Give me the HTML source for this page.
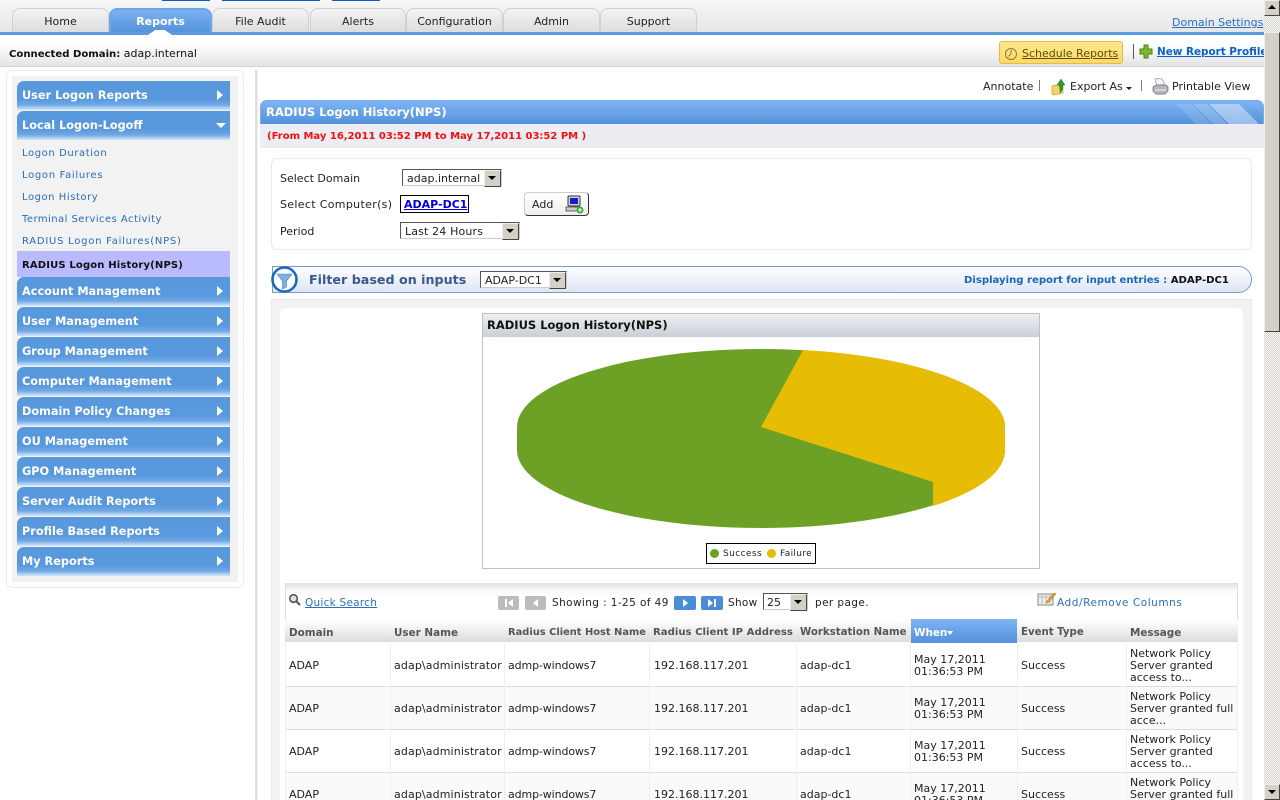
<!DOCTYPE html>
<html><head><meta charset="utf-8"><title>RADIUS Logon History(NPS)</title>
<style>
html,body{margin:0;padding:0;width:1280px;height:800px;overflow:hidden;background:#fff}
body{position:relative;font:11px "DejaVu Sans","Liberation Sans",sans-serif;color:#222}
div,span,a,svg{position:absolute;box-sizing:border-box}
.t{white-space:nowrap;line-height:14px;height:14px}
.b{font-weight:bold}
a{color:#0a5cc4;text-decoration:underline}
.tab{top:8px;height:25px;border:1px solid #d0d0d0;border-bottom:0;border-radius:8px 8px 0 0;background:linear-gradient(#f4f4f4,#dcdcdc);text-align:center;line-height:25px;color:#222}
.nav{left:17px;width:213px;height:29px;border-radius:7px 0 0 0;background:linear-gradient(#5898dc 0,#5898dc 62%,#6ea8e6 82%,#d6e6f8 100%);color:#fff;font-weight:bold;font-size:11.3px;line-height:30px;padding-left:5px;white-space:nowrap}
.nav:after{content:"";position:absolute;right:7px;top:9px;border-left:6px solid #fff;border-top:5px solid transparent;border-bottom:5px solid transparent}
.nav.o:after{right:4px;top:12px;border-top:5px solid #fff;border-left:5px solid transparent;border-right:5px solid transparent;border-bottom:0}
.sub{left:22px;color:#2a6cb8;font-size:10px;line-height:14px;height:14px;white-space:nowrap}
.sel{height:17px;background:#fff;border:1px solid #555;border-right-color:#ccc;border-bottom-color:#ccc;line-height:17px;padding-left:4px;white-space:nowrap}
.sel i{position:absolute;right:0;top:0;width:15px;height:15px;background:#d4d0c8;border:1px solid;border-color:#eee #444 #444 #eee}
.sel i:after{content:"";position:absolute;left:3px;top:5px;border-top:4px solid #000;border-left:4px solid transparent;border-right:4px solid transparent}
.th{top:626px;height:14px;line-height:14px;font-weight:bold;font-size:10.4px;color:#555;white-space:nowrap}
.c{white-space:nowrap;line-height:12px;font-size:11px;color:#222;margin-top:1px}
.u{letter-spacing:.12px}
.h{letter-spacing:-.12px}
.v{top:643px;width:1px;height:172px;background:#eee}
.pg{top:596px;width:21px;height:14px;border-radius:2px}
</style></head><body>

<!-- top bar -->
<div style="left:0;top:0;width:1264px;height:33px;background:linear-gradient(#f6f6f6,#e6e6e6)"></div>
<div style="left:162px;top:0;width:48px;height:1px;background:#0a5cc0"></div>
<div style="left:222px;top:0;width:98px;height:1px;background:#0a5cc0"></div>
<div style="left:332px;top:0;width:48px;height:1px;background:#0a5cc0"></div>
<div class="tab" style="left:12px;width:97px">Home</div>
<div class="tab b" style="left:109px;width:103px;border:2px solid #6ea6ea;border-bottom:0;background:linear-gradient(#7cb2f2,#5291d8);color:#fff;line-height:23px">Reports</div>
<div class="tab" style="left:212px;width:97px">File Audit</div>
<div class="tab" style="left:310px;width:96px">Alerts</div>
<div class="tab" style="left:406px;width:97px">Configuration</div>
<div class="tab" style="left:503px;width:97px">Admin</div>
<div class="tab" style="left:600px;width:97px">Support</div>
<a class="t" style="left:1172px;top:16px;font-size:11px;color:#2a70c0">Domain Settings</a>
<div style="left:0;top:32px;width:1264px;height:3px;background:#5a9ae0"></div>
<div style="left:148px;top:30px;width:24px;height:5px;background:#fff;clip-path:polygon(0 100%,30% 0,70% 0,100% 100%)"></div>

<!-- connected domain bar -->
<div style="left:0;top:35px;width:1264px;height:32px;background:linear-gradient(#fff 30%,#e4e4e4);border-bottom:1px solid #d4d4d4"></div>
<div class="t" style="left:9px;top:47px;color:#111;font-size:11px"><b style="font-size:10.1px">Connected Domain:</b> adap.internal</div>
<div style="left:999px;top:41px;width:124px;height:23px;background:linear-gradient(#ffe88a,#fdd964);border:1px solid #e4bc4c;border-radius:3px"></div>
<svg style="left:1004px;top:47px" width="14" height="14" viewBox="0 0 14 14"><circle cx="7" cy="7" r="5.5" fill="none" stroke="#8c7c3c"/><path d="M7.5 3 L6.5 7.5 L4.5 9.5" fill="none" stroke="#8c7c3c"/></svg>
<a class="t" style="left:1022px;top:47px;color:#5a4c1a;font-size:11px">Schedule Reports</a>
<div style="left:1133px;top:44px;width:1px;height:15px;background:#556"></div>
<svg style="left:1139px;top:44px" width="14" height="15" viewBox="0 0 14 15"><path d="M5 1h4v4h4v5H9v4H5v-4H1V5h4z" fill="#7ab82c" stroke="#4a7c1c"/></svg>
<a class="t b" style="left:1157px;top:45px;color:#0a62cc;font-size:10.4px">New Report Profile</a>

<!-- sidebar -->
<div style="left:6px;top:70px;width:238px;height:518px;background:#fff;border:1px solid #ececec;border-radius:6px"></div>
<div style="left:12px;top:76px;width:226px;height:506px;background:#f2f2f2"></div>
<div style="left:255px;top:70px;width:3px;height:730px;background:#ddd;border-right:1px solid #eee"></div>
<div class="nav" style="top:81px">User Logon Reports</div>
<div class="nav o" style="top:111px">Local Logon-Logoff</div>
<div class="sub" style="top:147px;letter-spacing:.6px">Logon Duration</div>
<div class="sub" style="top:169px;letter-spacing:.68px">Logon Failures</div>
<div class="sub" style="top:191px;letter-spacing:.55px">Logon History</div>
<div class="sub" style="top:213px;letter-spacing:.45px">Terminal Services Activity</div>
<div class="sub" style="top:235px;letter-spacing:.75px">RADIUS Logon Failures(NPS)</div>
<div style="left:17px;top:251px;width:213px;height:26px;background:#babafe"></div>
<div class="t b" style="left:22px;top:259px;font-size:10px;color:#111;letter-spacing:.16px">RADIUS Logon History(NPS)</div>
<div class="nav" style="top:277px">Account Management</div>
<div class="nav" style="top:307px">User Management</div>
<div class="nav" style="top:337px">Group Management</div>
<div class="nav" style="top:367px">Computer Management</div>
<div class="nav" style="top:397px">Domain Policy Changes</div>
<div class="nav" style="top:427px">OU Management</div>
<div class="nav" style="top:457px">GPO Management</div>
<div class="nav" style="top:487px">Server Audit Reports</div>
<div class="nav" style="top:517px">Profile Based Reports</div>
<div class="nav" style="top:547px">My Reports</div>

<!-- action row -->
<div class="t" style="left:983px;top:80px;color:#222">Annotate</div>
<div style="left:1039px;top:80px;width:1px;height:11px;background:#778"></div>
<svg style="left:1051px;top:78px" width="16" height="18" viewBox="0 0 16 18"><path d="M1 8l5-1 1 1h5v7l-9 2-2-1z" fill="#f4d468" stroke="#c8a030" stroke-width=".7"/><path d="M10 1l4 6h-2c0 4-1 6-3 8 0-3 0-5-1-8H6z" fill="#2a9a2a" stroke="#1a6a1a" stroke-width=".4"/></svg>
<div class="t" style="left:1070px;top:80px;color:#222">Export As</div>
<div style="left:1126px;top:87px;border-top:3px solid #222;border-left:3px solid transparent;border-right:3px solid transparent"></div>
<div style="left:1141px;top:80px;width:1px;height:11px;background:#778"></div>
<svg style="left:1152px;top:78px" width="17" height="17" viewBox="0 0 17 17"><path d="M3 1l6-1 3 4 0 4H5z" fill="#f4f4f4" stroke="#999" stroke-width=".7"/><path d="M1 9l3-2h10l2 2v4l-3 3H4l-3-3z" fill="#b4b8bc" stroke="#666" stroke-width=".7"/><path d="M3 12h11" stroke="#eee"/></svg>
<div class="t" style="left:1172px;top:80px;color:#222">Printable View</div>

<!-- title -->
<div style="left:260px;top:100px;width:1004px;height:24px;border:1px solid #74aaf0;border-bottom:0;border-radius:7px 7px 0 0;background:linear-gradient(#7fb4f4,#5492da);overflow:hidden">
 <svg style="right:0;top:0" width="90" height="24" viewBox="0 0 90 24"><path d="M3 3h15l20 20H23z" fill="#fff" opacity=".14"/><path d="M20 3h14l20 20H40z" fill="#fff" opacity=".2"/><path d="M36 3h30l20 20H56z" fill="#fff" opacity=".4"/></svg>
</div>
<div class="t b" style="left:266px;top:105px;color:#fff;font-size:11.5px">RADIUS Logon History(NPS)</div>
<div style="left:260px;top:124px;width:1004px;height:24px;background:#ecedf2"></div>
<div class="t b" style="left:267px;top:130px;color:#f01010;font-size:10px">(From May 16,2011 03:52 PM to May 17,2011 03:52 PM )</div>

<!-- form -->
<div style="left:271px;top:158px;width:981px;height:92px;border:1px solid #eaeaea;border-radius:6px"></div>
<div class="t" style="left:280px;top:172px">Select Domain</div>
<div class="sel" style="left:402px;top:169px;width:100px">adap.internal<i></i></div>
<div class="t" style="left:280px;top:198px;letter-spacing:.33px">Select Computer(s)</div>
<div style="left:400px;top:195px;width:69px;height:18px;border:1px solid #000"></div>
<a class="t b" style="left:404px;top:198px;color:#0000e0;font-size:11px">ADAP-DC1</a>
<div style="left:524px;top:192px;width:65px;height:24px;border:1px solid #333;border-top-color:#ccc;border-left-color:#ccc;border-radius:4px;background:linear-gradient(#fff,#eee)"></div>
<div class="t" style="left:532px;top:198px">Add</div>
<svg style="left:565px;top:195px" width="20" height="19" viewBox="0 0 20 19"><rect x="3" y="1" width="12" height="10" rx="1" fill="#d0d4dc" stroke="#333"/><rect x="5" y="3" width="8" height="6" fill="#1020c0"/><rect x="1" y="12" width="14" height="4" fill="#c8ccd4" stroke="#333" stroke-width=".7"/><circle cx="15" cy="15" r="3.5" fill="#3aa83a"/><path d="M13 15h4M15 13v4" stroke="#fff"/></svg>
<div class="t" style="left:280px;top:225px">Period</div>
<div class="sel" style="left:400px;top:222px;width:120px;letter-spacing:.15px">Last 24 Hours<i></i></div>

<!-- filter -->
<div style="left:272px;top:266px;width:980px;height:27px;border:1px solid #7e9ac0;border-radius:0 14px 14px 0;background:linear-gradient(#fff,#dce6f4)"></div>
<svg style="left:271px;top:266px" width="27" height="27" viewBox="0 0 27 27"><circle cx="13.5" cy="13.5" r="12" fill="#fff" stroke="#1a6ac4" stroke-width="2.6"/><path d="M6 8h15l-5.5 7v6l-4 2v-8z" fill="#7cb0e4" stroke="#4a84c4" stroke-width=".6"/></svg>
<div class="t b" style="left:309px;top:273px;font-size:12.7px;color:#3a5a8a">Filter based on inputs</div>
<div class="sel" style="left:480px;top:271px;width:87px">ADAP-DC1<i></i></div>
<div class="t b" style="left:964px;top:274px;font-size:10.1px;color:#1a66b8">Displaying report for input entries : <span style="position:static;color:#111">ADAP-DC1</span></div>

<!-- report panel -->
<div style="left:271px;top:299px;width:981px;height:501px;background:#f2f2f2;border:1px solid #eaeaea;border-bottom:0"></div>
<div style="left:280px;top:308px;width:963px;height:492px;background:#fff;border-radius:6px 6px 0 0"></div>

<!-- chart -->
<div style="left:482px;top:313px;width:558px;height:256px;border:1px solid #c0c0c0;background:#fff"></div>
<div style="left:483px;top:314px;width:556px;height:23px;background:linear-gradient(#eff0f3,#c9ced6)"></div>
<div class="t b" style="left:487px;top:318px;color:#111;font-size:11.5px">RADIUS Logon History(NPS)</div>
<svg style="left:500px;top:340px" width="520" height="200" viewBox="500 340 520 200">
<path d="M517 427A244 78 0 0 1 1005 427V450A244 78 0 0 1 517 450Z" fill="#6ca125"/>
<path d="M761 427L803 350A244 78 0 0 1 1005 427V450A244 78 0 0 1 933 506V482Z" fill="#e6bd04"/>
</svg>
<div style="left:706px;top:543px;width:110px;height:21px;border:1px solid #000;background:#fff"></div>
<div style="left:710px;top:549px;width:9px;height:9px;border-radius:50%;background:#6ca125"></div>
<div class="t" style="left:723px;top:547px;font-size:9px;color:#222;letter-spacing:.4px">Success</div>
<div style="left:767px;top:549px;width:9px;height:9px;border-radius:50%;background:#e6bd04"></div>
<div class="t" style="left:780px;top:547px;font-size:9px;color:#222;letter-spacing:.35px">Failure</div>

<!-- table toolbar -->
<div style="left:285px;top:583px;width:953px;height:37px;background:linear-gradient(#e0e0e0 0,#f8f8f8 7px,#fff 14px);border-left:1px solid #ddd;border-right:1px solid #ddd"></div>
<svg style="left:288px;top:593px" width="14" height="14" viewBox="0 0 14 14"><circle cx="5.5" cy="5.5" r="3.8" fill="#dde" stroke="#555" stroke-width="1.6"/><path d="M8.5 8.5l3.5 3.5" stroke="#555" stroke-width="2"/></svg>
<a class="t" style="left:305px;top:596px;color:#2a70c0;font-size:10.5px;letter-spacing:.25px">Quick Search</a>
<div class="pg" style="left:498px;background:#bcbcbc"></div><svg style="left:504px;top:598px" width="10" height="10" viewBox="0 0 10 10"><path d="M1 1h2v8H1zM9 1v8L4 5z" fill="#fff"/></svg>
<div class="pg" style="left:525px;background:#bcbcbc"></div><svg style="left:531px;top:598px" width="10" height="10" viewBox="0 0 10 10"><path d="M7 1v8L2 5z" fill="#fff"/></svg>
<div class="t" style="left:552px;top:596px;font-size:10.5px;letter-spacing:.4px">Showing : 1-25 of 49</div>
<div class="pg" style="left:674px;width:22px;background:#4a8cd8"></div><svg style="left:680px;top:598px" width="10" height="10" viewBox="0 0 10 10"><path d="M3 1v8l5-4z" fill="#fff"/></svg>
<div class="pg" style="left:701px;width:22px;background:#4a8cd8"></div><svg style="left:707px;top:598px" width="10" height="10" viewBox="0 0 10 10"><path d="M1 1v8l5-4zM7 1h2v8H7z" fill="#fff"/></svg>
<div class="t" style="left:728px;top:596px;font-size:10.5px;letter-spacing:.3px">Show</div>
<div class="sel" style="left:763px;top:593px;width:45px;padding-left:3px">25<i></i></div>
<div class="t" style="left:815px;top:596px;font-size:10.5px;letter-spacing:.4px">per page.</div>
<svg style="left:1037px;top:591px" width="20" height="16" viewBox="0 0 20 16"><rect x="1" y="3" width="15" height="11" fill="#eee" stroke="#888"/><path d="M1 6h15M5 3v11M9 3v11M13 3v11" stroke="#aaa" stroke-width=".7"/><path d="M10 10l7-8 2 1-7 8-3 1z" fill="#e8a020" stroke="#a86810" stroke-width=".5"/></svg>
<div class="t" style="left:1057px;top:596px;color:#2a70c0;font-size:10.5px;letter-spacing:.55px">Add/Remove Columns</div>

<!-- table header -->
<div style="left:285px;top:620px;width:953px;height:22px;background:linear-gradient(#fff,#dcdcdc)"></div>
<div class="th" style="left:289px">Domain</div>
<div class="th" style="left:394px">User Name</div>
<div class="th" style="left:508px;font-size:9.9px">Radius Client Host Name</div>
<div class="th" style="left:653px;font-size:10.15px">Radius Client IP Address</div>
<div class="th" style="left:800px;font-size:10.2px">Workstation Name</div>
<div style="left:911px;top:619px;width:106px;height:24px;background:linear-gradient(#7fb4f4,#5492da)"></div>
<div class="th" style="left:914px;color:#fff">When</div>
<div style="left:947px;top:631px;border-top:4px solid #fff;border-left:3px solid transparent;border-right:3px solid transparent"></div>
<div class="th" style="left:1021px;font-size:10.2px">Event Type</div>
<div class="th" style="left:1130px">Message</div>

<!-- rows -->
<div style="left:285px;top:686px;width:953px;height:1px;background:#ddd"></div>
<div style="left:285px;top:687px;width:953px;height:42px;background:#fafafa"></div>
<div style="left:285px;top:729px;width:953px;height:1px;background:#ddd"></div>
<div style="left:285px;top:772px;width:953px;height:1px;background:#ddd"></div>
<div style="left:285px;top:773px;width:953px;height:27px;background:#fafafa"></div>
<div class="v" style="left:285px"></div><div class="v" style="left:390px"></div><div class="v" style="left:504px"></div><div class="v" style="left:649px"></div><div class="v" style="left:796px"></div><div class="v" style="left:910px"></div><div class="v" style="left:1017px"></div><div class="v" style="left:1126px"></div><div class="v" style="left:1237px"></div>

<div class="c" style="left:289px;top:659px">ADAP</div><div class="c u" style="left:394px;top:659px">adap\administrator</div><div class="c h" style="left:508px;top:659px">admp-windows7</div><div class="c" style="left:654px;top:659px">192.168.117.201</div><div class="c" style="left:800px;top:659px">adap-dc1</div><div class="c" style="left:914px;top:653px">May 17,2011<br>01:36:53 PM</div><div class="c" style="left:1021px;top:659px">Success</div><div class="c" style="left:1130px;top:647px">Network Policy<br>Server granted<br>access to...</div>

<div class="c" style="left:289px;top:702px">ADAP</div><div class="c u" style="left:394px;top:702px">adap\administrator</div><div class="c h" style="left:508px;top:702px">admp-windows7</div><div class="c" style="left:654px;top:702px">192.168.117.201</div><div class="c" style="left:800px;top:702px">adap-dc1</div><div class="c" style="left:914px;top:696px">May 17,2011<br>01:36:53 PM</div><div class="c" style="left:1021px;top:702px">Success</div><div class="c" style="left:1130px;top:690px">Network Policy<br>Server granted full<br>acce...</div>

<div class="c" style="left:289px;top:745px">ADAP</div><div class="c u" style="left:394px;top:745px">adap\administrator</div><div class="c h" style="left:508px;top:745px">admp-windows7</div><div class="c" style="left:654px;top:745px">192.168.117.201</div><div class="c" style="left:800px;top:745px">adap-dc1</div><div class="c" style="left:914px;top:739px">May 17,2011<br>01:36:53 PM</div><div class="c" style="left:1021px;top:745px">Success</div><div class="c" style="left:1130px;top:733px">Network Policy<br>Server granted<br>access to...</div>

<div class="c" style="left:289px;top:788px">ADAP</div><div class="c u" style="left:394px;top:788px">adap\administrator</div><div class="c h" style="left:508px;top:788px">admp-windows7</div><div class="c" style="left:654px;top:788px">192.168.117.201</div><div class="c" style="left:800px;top:788px">adap-dc1</div><div class="c" style="left:914px;top:782px">May 17,2011<br>01:36:53 PM</div><div class="c" style="left:1021px;top:788px">Success</div><div class="c" style="left:1130px;top:776px">Network Policy<br>Server granted full</div>

<!-- scrollbar -->
<div style="left:1264px;top:0;width:16px;height:800px;background:repeating-conic-gradient(#d4d0c8 0 25%,#fff 0 50%) 0 0/2px 2px"></div>
<div style="left:1264px;top:0;width:16px;height:16px;background:#d4d0c8;border:1px solid;border-color:#eee #444 #444 #eee"></div>
<div style="left:1268px;top:5px;border-bottom:4px solid #000;border-left:4px solid transparent;border-right:4px solid transparent"></div>
<div style="left:1264px;top:32px;width:16px;height:300px;background:#d4d0c8;border:1px solid;border-color:#eee #444 #444 #eee"></div>
<div style="left:1264px;top:784px;width:16px;height:16px;background:#d4d0c8;border:1px solid;border-color:#eee #444 #444 #eee"></div>
<div style="left:1268px;top:790px;border-top:4px solid #000;border-left:4px solid transparent;border-right:4px solid transparent"></div>
</body></html>
